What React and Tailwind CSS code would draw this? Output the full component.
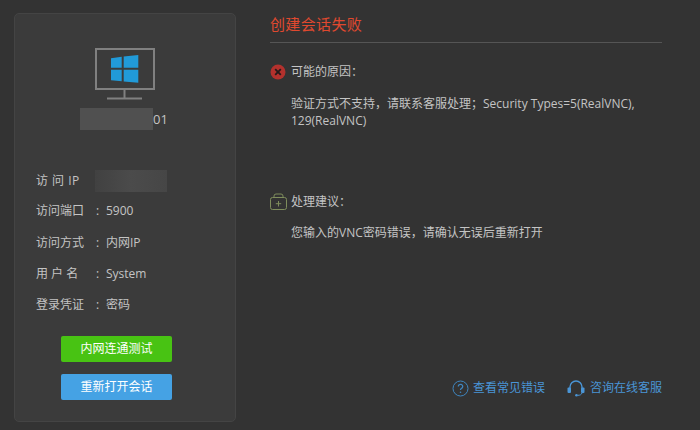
import React from 'react';

const rows = [
  { label: '访问端口', value: '5900', cls: 'mt-[9px]' },
  { label: '访问方式', value: '内网IP', cls: 'mt-[13px]' },
  { label: '用 户 名', value: 'System', cls: 'mt-[12px]' },
  { label: '登录凭证', value: '密码', cls: 'mt-[12px]' },
];

function MonitorIcon() {
  return (
    <svg width="60" height="52" viewBox="0 0 60 52" fill="none">
      <rect x="1" y="1" width="58" height="40" stroke="#808080" strokeWidth="2" />
      <path d="M29.5 42v8" stroke="#808080" strokeWidth="2" />
      <path d="M12 50.5h35" stroke="#808080" strokeWidth="2" />
      <path d="M16 10.3l10.7-1.5v10.9H16zM28.7 8.6L43.3 7v12.7H28.7zM16 21.7h10.7v11.6L16 32.3zM28.7 21.7h14.6v13l-14.6-1.3z" fill="#219ad8" />
    </svg>
  );
}

export default function App() {
  return (
    <div className="w-[700px] h-[430px] overflow-hidden bg-[#333333] flex text-[12px] text-[#c4c4c4] font-['Open_Sans','Noto_Sans_CJK_SC',sans-serif]">
      <div className="ml-[14px] mt-[13px] w-[222px] h-[409px] shrink-0 bg-[#3b3b3b] border border-[#444444] rounded-[5px] flex flex-col">
        <div className="mt-[34px] ml-[80px]">
          <MonitorIcon />
        </div>
        <div className="mt-[8px] ml-[65px] flex items-center">
          <div className="w-[73px] h-[22px] bg-[#505050]" />
          <span className="text-[13px] leading-[22px]">01</span>
        </div>
        <div className="mt-[40px] ml-[21px] flex items-center h-[22px]">
          <span className="w-[59px] tracking-[0.5px]">访 问 IP</span>
          <div className="w-[72px] h-[22px] bg-linear-to-r from-[#414141] via-[#4b4b4b] to-[#464646]" />
        </div>
        {rows.map(r => (
          <div key={r.label} className={`${r.cls} ml-[21px] flex items-center h-[19px]`}>
            <span className="w-[60px] whitespace-pre">{r.label}</span>
            <span className="w-[10px]">:</span>
            <span>{r.value}</span>
          </div>
        ))}
        <button className="mt-[22px] ml-[46px] w-[111px] h-[26px] bg-[#48c313] rounded-[2px] text-white text-[12px]">内网连通测试</button>
        <button className="mt-[12px] ml-[46px] w-[111px] h-[26px] bg-[#45a2e4] rounded-[2px] text-white text-[12px]">重新打开会话</button>
      </div>

      <div className="ml-[34px] w-[392px] flex flex-col">
        <div className="mt-[13px] h-[30px] border-b border-[#555555] text-[15px] tracking-[0.35px] leading-[22px] text-[#e0492f]">创建会话失败</div>
        <div className="mt-[21px] flex items-center h-[16px]">
          <svg width="16" height="16" viewBox="0 0 16 16">
            <circle cx="8" cy="8" r="7.5" fill="#b3312d" />
            <path d="M5.2 5.2l5.6 5.6M10.8 5.2l-5.6 5.6" stroke="#241a1a" strokeWidth="1.8" />
          </svg>
          <span className="ml-[5px]">可能的原因：</span>
        </div>
        <p className="mt-[15px] ml-[21px] w-[360px] leading-[17px]">验证方式不支持，请联系客服处理；Security Types=5(RealVNC), 129(RealVNC)</p>
        <div className="mt-[64px] flex items-center h-[18px]">
          <svg width="17" height="18" viewBox="0 0 17 18" fill="none" stroke="#7f8d5c" strokeWidth="1">
            <rect x="0.5" y="4.5" width="16" height="12" rx="2" />
            <path d="M4 4.5V3a2 2 0 012-2h5a2 2 0 012 2v1.5" />
            <path d="M8.5 8v5.5M5.8 10.7h5.4" />
          </svg>
          <span className="ml-[4px]">处理建议：</span>
        </div>
        <p className="mt-[13px] ml-[21px] leading-[17px]">您输入的VNC密码错误，请确认无误后重新打开</p>
        <div className="mt-[138px] flex justify-end items-center text-[#4a95d6]">
          <svg width="17" height="17" viewBox="0 0 17 17" fill="none" stroke="#3f86c0" strokeWidth="1">
            <circle cx="8.5" cy="8.5" r="7.5" />
            <path d="M6.3 6.6a2.2 2.2 0 114 1.2c-.7.7-1.8 1-1.8 2.2" strokeWidth="1.3" />
            <circle cx="8.5" cy="12.2" r="0.8" fill="#3f86c0" stroke="none" />
          </svg>
          <span className="ml-[4px]">查看常见错误</span>
          <svg className="ml-[22px]" width="18" height="17" viewBox="0 0 18 17" fill="none">
            <path d="M3 9V7a6 6 0 0112 0v2" stroke="#4a95d6" strokeWidth="1.4" />
            <rect x="0.5" y="7.5" width="3.5" height="5.5" rx="1" fill="#4a95d6" />
            <rect x="14" y="7.5" width="3.5" height="5.5" rx="1" fill="#4a95d6" />
            <path d="M15 13c-.5 1.6-2 2.3-4 2.3" stroke="#4a95d6" strokeWidth="1" />
            <circle cx="9.5" cy="15.3" r="1.3" fill="#4a95d6" />
          </svg>
          <span className="ml-[5px]">咨询在线客服</span>
        </div>
      </div>
    </div>
  );
}
